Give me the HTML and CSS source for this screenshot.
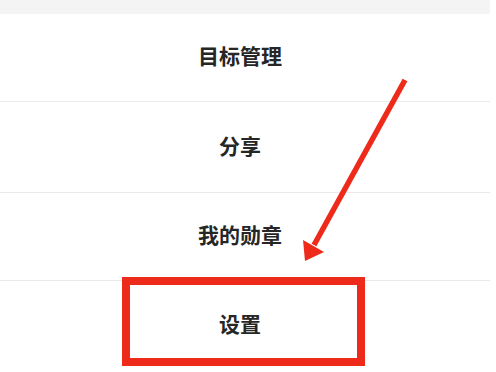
FILE: index.html
```html
<!DOCTYPE html>
<html lang="zh-CN">
<head>
<meta charset="utf-8">
<link rel="stylesheet" href="styles.css">
</head>
<body>
<div class="page">
  <div class="topbar"></div>
  <ul class="menu">
    <li class="item item-a">目标管理</li>
    <li class="item item-b">分享</li>
    <li class="item item-a">我的勋章</li>
    <li class="item item-last">设置</li>
  </ul>
  <svg class="annot" width="496" height="372" viewBox="0 0 496 372">
    <line x1="405" y1="80" x2="314" y2="245" stroke="#ee2b1b" stroke-width="5.5" stroke-linecap="butt"/>
    <polygon points="303,240 324,252 305,261" fill="#ee2b1b"/>
  </svg>
  <div class="highlight"></div>
</div>
</body>
</html>
```
FILE: styles.css
```css
html, body {
  margin: 0;
  padding: 0;
  background: #ffffff;
}
.page {
  position: relative;
  width: 496px;
  height: 372px;
  overflow: hidden;
  font-family: "Noto Sans CJK SC", "Noto Sans", sans-serif;
}
.topbar {
  width: 490px;
  height: 14px;
  background: #f4f4f4;
}
.menu {
  list-style: none;
  margin: 0;
  padding: 0;
  width: 490px;
}
.item {
  display: flex;
  align-items: center;
  justify-content: center;
  padding-right: 10px;
  padding-bottom: 5px;
  box-sizing: border-box;
  font-size: 21px;
  font-weight: 700;
  color: #262626;
  border-bottom: 1px solid #e9e9e9;
}
.item-a { height: 88px; }
.item-b { height: 91px; }
.item-last {
  height: 88px;
  border-bottom: none;
}
.annot {
  position: absolute;
  left: 0;
  top: 0;
}
.highlight {
  position: absolute;
  left: 122px;
  top: 277px;
  width: 243px;
  height: 89px;
  box-sizing: border-box;
  border: 8px solid #ee2b1b;
}
```
